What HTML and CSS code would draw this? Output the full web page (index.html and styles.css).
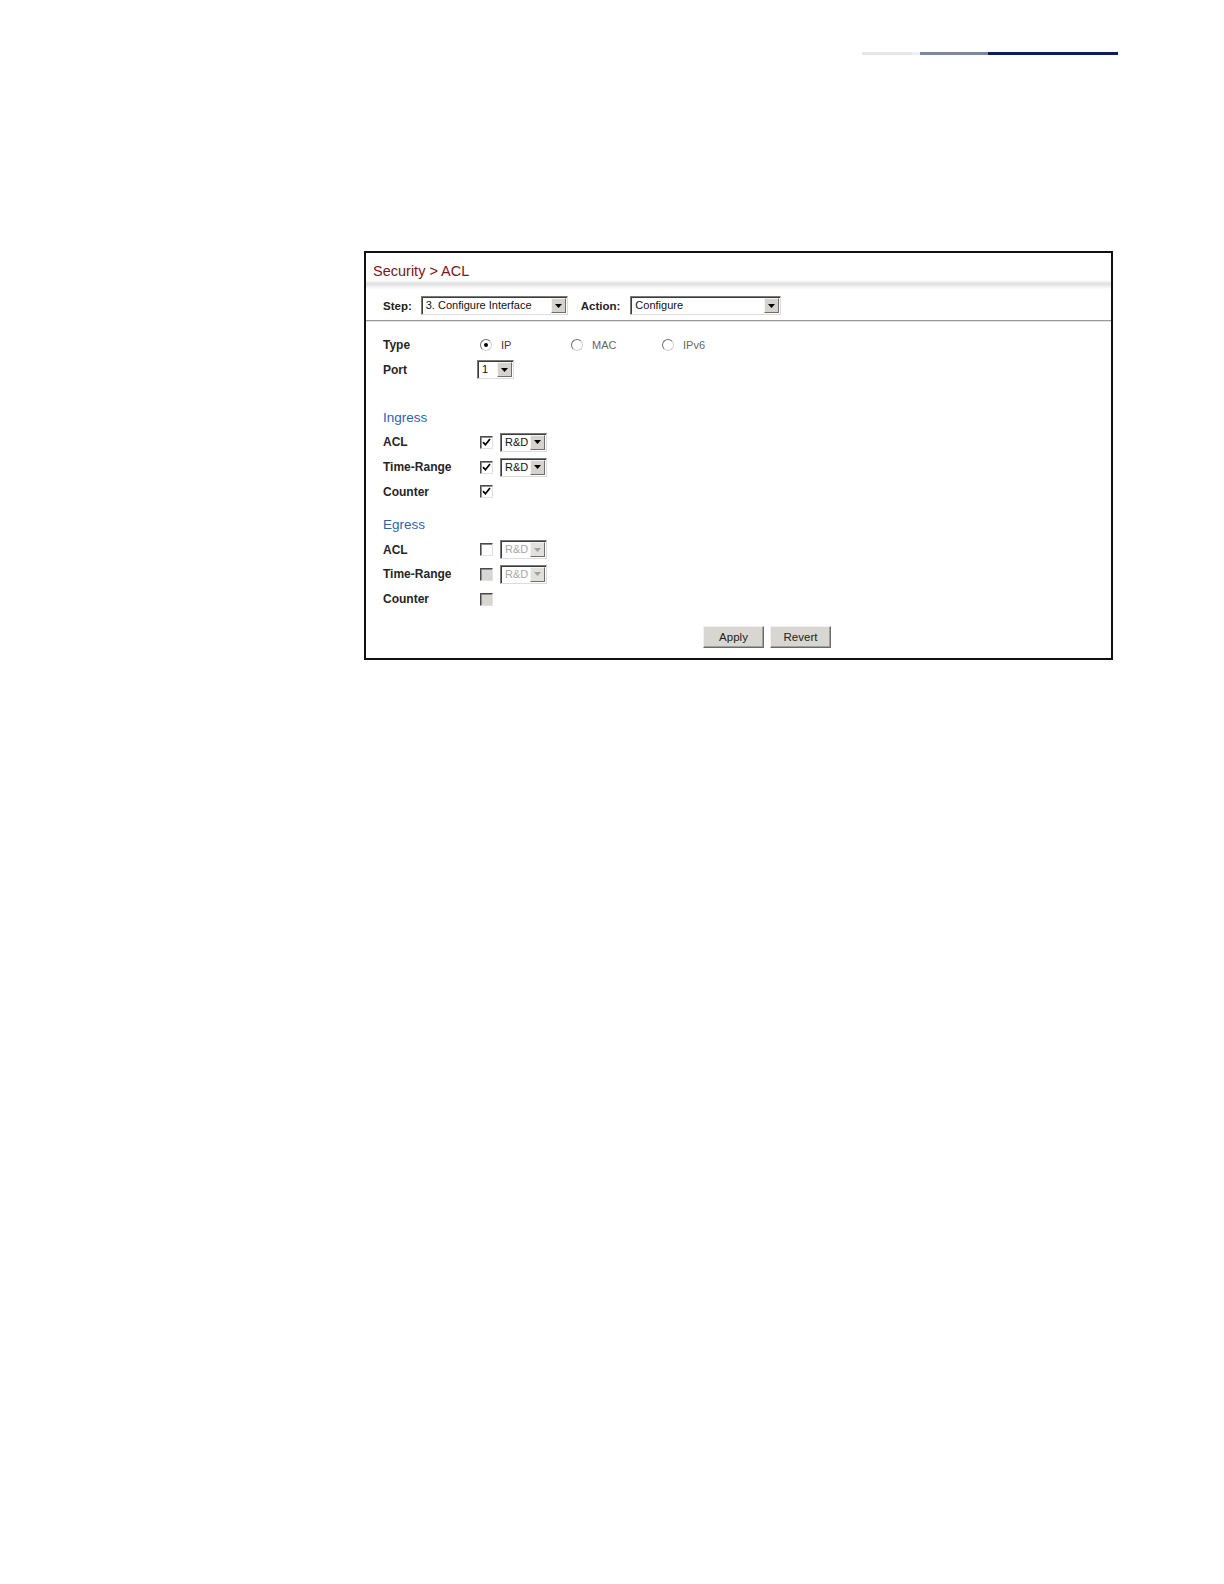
FILE: index.html
```html
<!DOCTYPE html>
<html>
<head>
<meta charset="utf-8">
<title>Security &gt; ACL</title>
<link rel="stylesheet" href="styles.css">
</head>
<body>
<div class="page">
  <div class="rule">
    <span class="seg seg-light"></span>
    <span class="seg seg-fade"></span>
    <span class="seg seg-mid"></span>
    <span class="seg seg-dark"></span>
  </div>

  <div class="frame">
    <div class="title">Security &gt; ACL</div>
    <div class="band"></div>
    <div class="steprow">
      <span class="steplabel">Step:</span>
      <span class="sel sel-step"><span class="sel-val">3. Configure Interface</span><span class="sel-btn"><svg width="7" height="4" viewBox="0 0 7 4"><path d="M0 0H7L3.5 4Z" fill="#000"/></svg></span></span>
      <span class="steplabel action">Action:</span>
      <span class="sel sel-action"><span class="sel-val">Configure</span><span class="sel-btn"><svg width="7" height="4" viewBox="0 0 7 4"><path d="M0 0H7L3.5 4Z" fill="#000"/></svg></span></span>
    </div>

    <div class="body">
      <div class="row">
        <span class="label">Type</span>
        <div class="radios">
          <span class="radio-opt"><span class="radio checked"></span><span class="rtext rtext-on">IP</span></span>
          <span class="radio-opt"><span class="radio"></span><span class="rtext">MAC</span></span>
          <span class="radio-opt"><span class="radio"></span><span class="rtext">IPv6</span></span>
        </div>
      </div>
      <div class="row">
        <span class="label">Port</span>
        <span class="sel sel-port"><span class="sel-val">1</span><span class="sel-btn"><svg width="7" height="4" viewBox="0 0 7 4"><path d="M0 0H7L3.5 4Z" fill="#000"/></svg></span></span>
      </div>

      <div class="section first">Ingress</div>
      <div class="row">
        <span class="label">ACL</span>
        <span class="cb checked"><svg width="9" height="9" viewBox="0 0 9 9"><path d="M1 4.2L3.4 6.8L8 1" stroke="#000" stroke-width="1.7" fill="none"/></svg></span>
        <span class="sel sel-small"><span class="sel-val">R&amp;D</span><span class="sel-btn"><svg width="7" height="4" viewBox="0 0 7 4"><path d="M0 0H7L3.5 4Z" fill="#000"/></svg></span></span>
      </div>
      <div class="row">
        <span class="label">Time-Range</span>
        <span class="cb checked"><svg width="9" height="9" viewBox="0 0 9 9"><path d="M1 4.2L3.4 6.8L8 1" stroke="#000" stroke-width="1.7" fill="none"/></svg></span>
        <span class="sel sel-small"><span class="sel-val">R&amp;D</span><span class="sel-btn"><svg width="7" height="4" viewBox="0 0 7 4"><path d="M0 0H7L3.5 4Z" fill="#000"/></svg></span></span>
      </div>
      <div class="row">
        <span class="label">Counter</span>
        <span class="cb checked"><svg width="9" height="9" viewBox="0 0 9 9"><path d="M1 4.2L3.4 6.8L8 1" stroke="#000" stroke-width="1.7" fill="none"/></svg></span>
      </div>

      <div class="section">Egress</div>
      <div class="row">
        <span class="label">ACL</span>
        <span class="cb"></span>
        <span class="sel sel-small disabled"><span class="sel-val">R&amp;D</span><span class="sel-btn"><svg width="7" height="4" viewBox="0 0 7 4"><path d="M0 0H7L3.5 4Z" fill="#a0a0a0"/></svg></span></span>
      </div>
      <div class="row">
        <span class="label">Time-Range</span>
        <span class="cb disabled"></span>
        <span class="sel sel-small disabled"><span class="sel-val">R&amp;D</span><span class="sel-btn"><svg width="7" height="4" viewBox="0 0 7 4"><path d="M0 0H7L3.5 4Z" fill="#a0a0a0"/></svg></span></span>
      </div>
      <div class="row">
        <span class="label">Counter</span>
        <span class="cb disabled"></span>
      </div>

      <div class="buttons">
        <span class="btn">Apply</span>
        <span class="btn">Revert</span>
      </div>
    </div>
  </div>
</div>
</body>
</html>
```

FILE: styles.css
```css
html, body {
  margin: 0;
  padding: 0;
  background: #ffffff;
}

body {
  width: 1224px;
  height: 1584px;
  font-family: "Liberation Sans", Arial, sans-serif;
  color: #222;
}

.page {
  padding-top: 52px;
}

.rule {
  display: flex;
  margin-left: 862px;
  width: 256px;
  height: 3px;
}

.seg {
  display: block;
  height: 3px;
}

.seg-light { width: 50px; background: #e6e6ea; }
.seg-fade  { width: 8px;  background: #eef0f8; }
.seg-mid   { width: 68px; background: #7b86a3; }
.seg-dark  { flex: 1;     background: #0b2155; }

.frame {
  margin-top: 196px;
  margin-left: 364px;
  width: 749px;
  height: 409px;
  box-sizing: border-box;
  border: 2px solid #111;
}

.title {
  padding: 10px 0 0 7px;
  height: 17px;
  font-size: 14.5px;
  line-height: 17px;
  color: #7a1518;
}

.band {
  height: 9px;
  background: linear-gradient(to bottom, #ffffff 0%, #e0e0e0 40%, #e8e8e8 60%, #ffffff 100%);
}

.steprow {
  display: flex;
  align-items: center;
  height: 32px;
  box-sizing: border-box;
  padding: 2px 0 0 17px;
  border-bottom: 1px solid #9a9a9a;
  box-shadow: 0 1px 0 #e2e2e2;
}

.steplabel {
  font-size: 11.5px;
  font-weight: bold;
  color: #222;
  margin-right: 9px;
}

.steplabel.action {
  margin-left: 13px;
  margin-right: 10px;
}

.sel {
  display: inline-flex;
  align-items: stretch;
  height: 19px;
  box-sizing: border-box;
  border-style: solid;
  border-width: 1px;
  border-color: #7a7a7a #dcdcdc #dcdcdc #7a7a7a;
  box-shadow: inset 1px 1px 0 #3c3c3c;
  background: #fff;
  padding: 1px 1px 0 1px;
}

.sel-val {
  flex: 1;
  font-size: 11px;
  line-height: 15px;
  padding-left: 3px;
  color: #111;
  white-space: nowrap;
  overflow: hidden;
}

.sel-btn {
  width: 15px;
  height: 15px;
  box-sizing: border-box;
  display: flex;
  align-items: center;
  justify-content: center;
  background: #d6d3ce;
  border-style: solid;
  border-width: 1px;
  border-color: #f4f4f4 #6e6e6e #6e6e6e #f4f4f4;
}

.sel-step { width: 147px; }
.sel-action { width: 151px; }
.sel-port { width: 37px; }
.sel-small { width: 47px; }

.sel.disabled .sel-val { color: #a8a8a8; }
.sel.disabled .sel-btn { background: #e2e0dc; }

.body {
  padding: 12px 0 0 17px;
}

.row {
  display: flex;
  align-items: center;
  height: 24.6px;
}

.label {
  width: 94px;
  flex: none;
  font-size: 12px;
  font-weight: bold;
  color: #262626;
}

.radios {
  display: flex;
  align-items: center;
  padding-left: 3px;
}

.radio-opt {
  display: flex;
  align-items: center;
  width: 91px;
}

.radio {
  width: 12px;
  height: 12px;
  box-sizing: border-box;
  border-radius: 50%;
  border: 1px solid;
  border-color: #6c6c6c #d0d0d0 #d0d0d0 #6c6c6c;
  background: #fff;
  position: relative;
  margin-right: 9px;
}

.radio.checked::after {
  content: "";
  position: absolute;
  left: 3px;
  top: 3px;
  width: 4px;
  height: 4px;
  border-radius: 50%;
  background: #000;
}

.rtext {
  font-size: 11px;
  color: #666;
}

.rtext-on {
  color: #383848;
}

.section {
  font-size: 13.5px;
  color: #2f62a6;
  height: 24.6px;
  line-height: 24.6px;
  margin-top: 9px;
}

.section.first {
  margin-top: 23.4px;
}

.cb {
  width: 13px;
  height: 13px;
  box-sizing: border-box;
  margin-left: 3px;
  margin-right: 7px;
  border-style: solid;
  border-width: 1px;
  border-color: #4a4a4a #e0e0e0 #e0e0e0 #4a4a4a;
  box-shadow: inset 1px 1px 0 #8c8c8c;
  background: #fff;
  display: flex;
  align-items: center;
  justify-content: center;
}

.cb.disabled {
  background: #d8d6d2;
}

.buttons {
  display: flex;
  gap: 6px;
  margin-top: 15px;
  padding-left: 320px;
}

.btn {
  width: 61px;
  height: 22px;
  box-sizing: border-box;
  background: #d8d6d1;
  border-style: solid;
  border-width: 1px;
  border-color: #f2f2f2 #6a6a6a #6a6a6a #f2f2f2;
  box-shadow: inset -1px -1px 0 #a0a0a0;
  font-size: 11.5px;
  line-height: 20px;
  text-align: center;
  color: #222;
}
```
